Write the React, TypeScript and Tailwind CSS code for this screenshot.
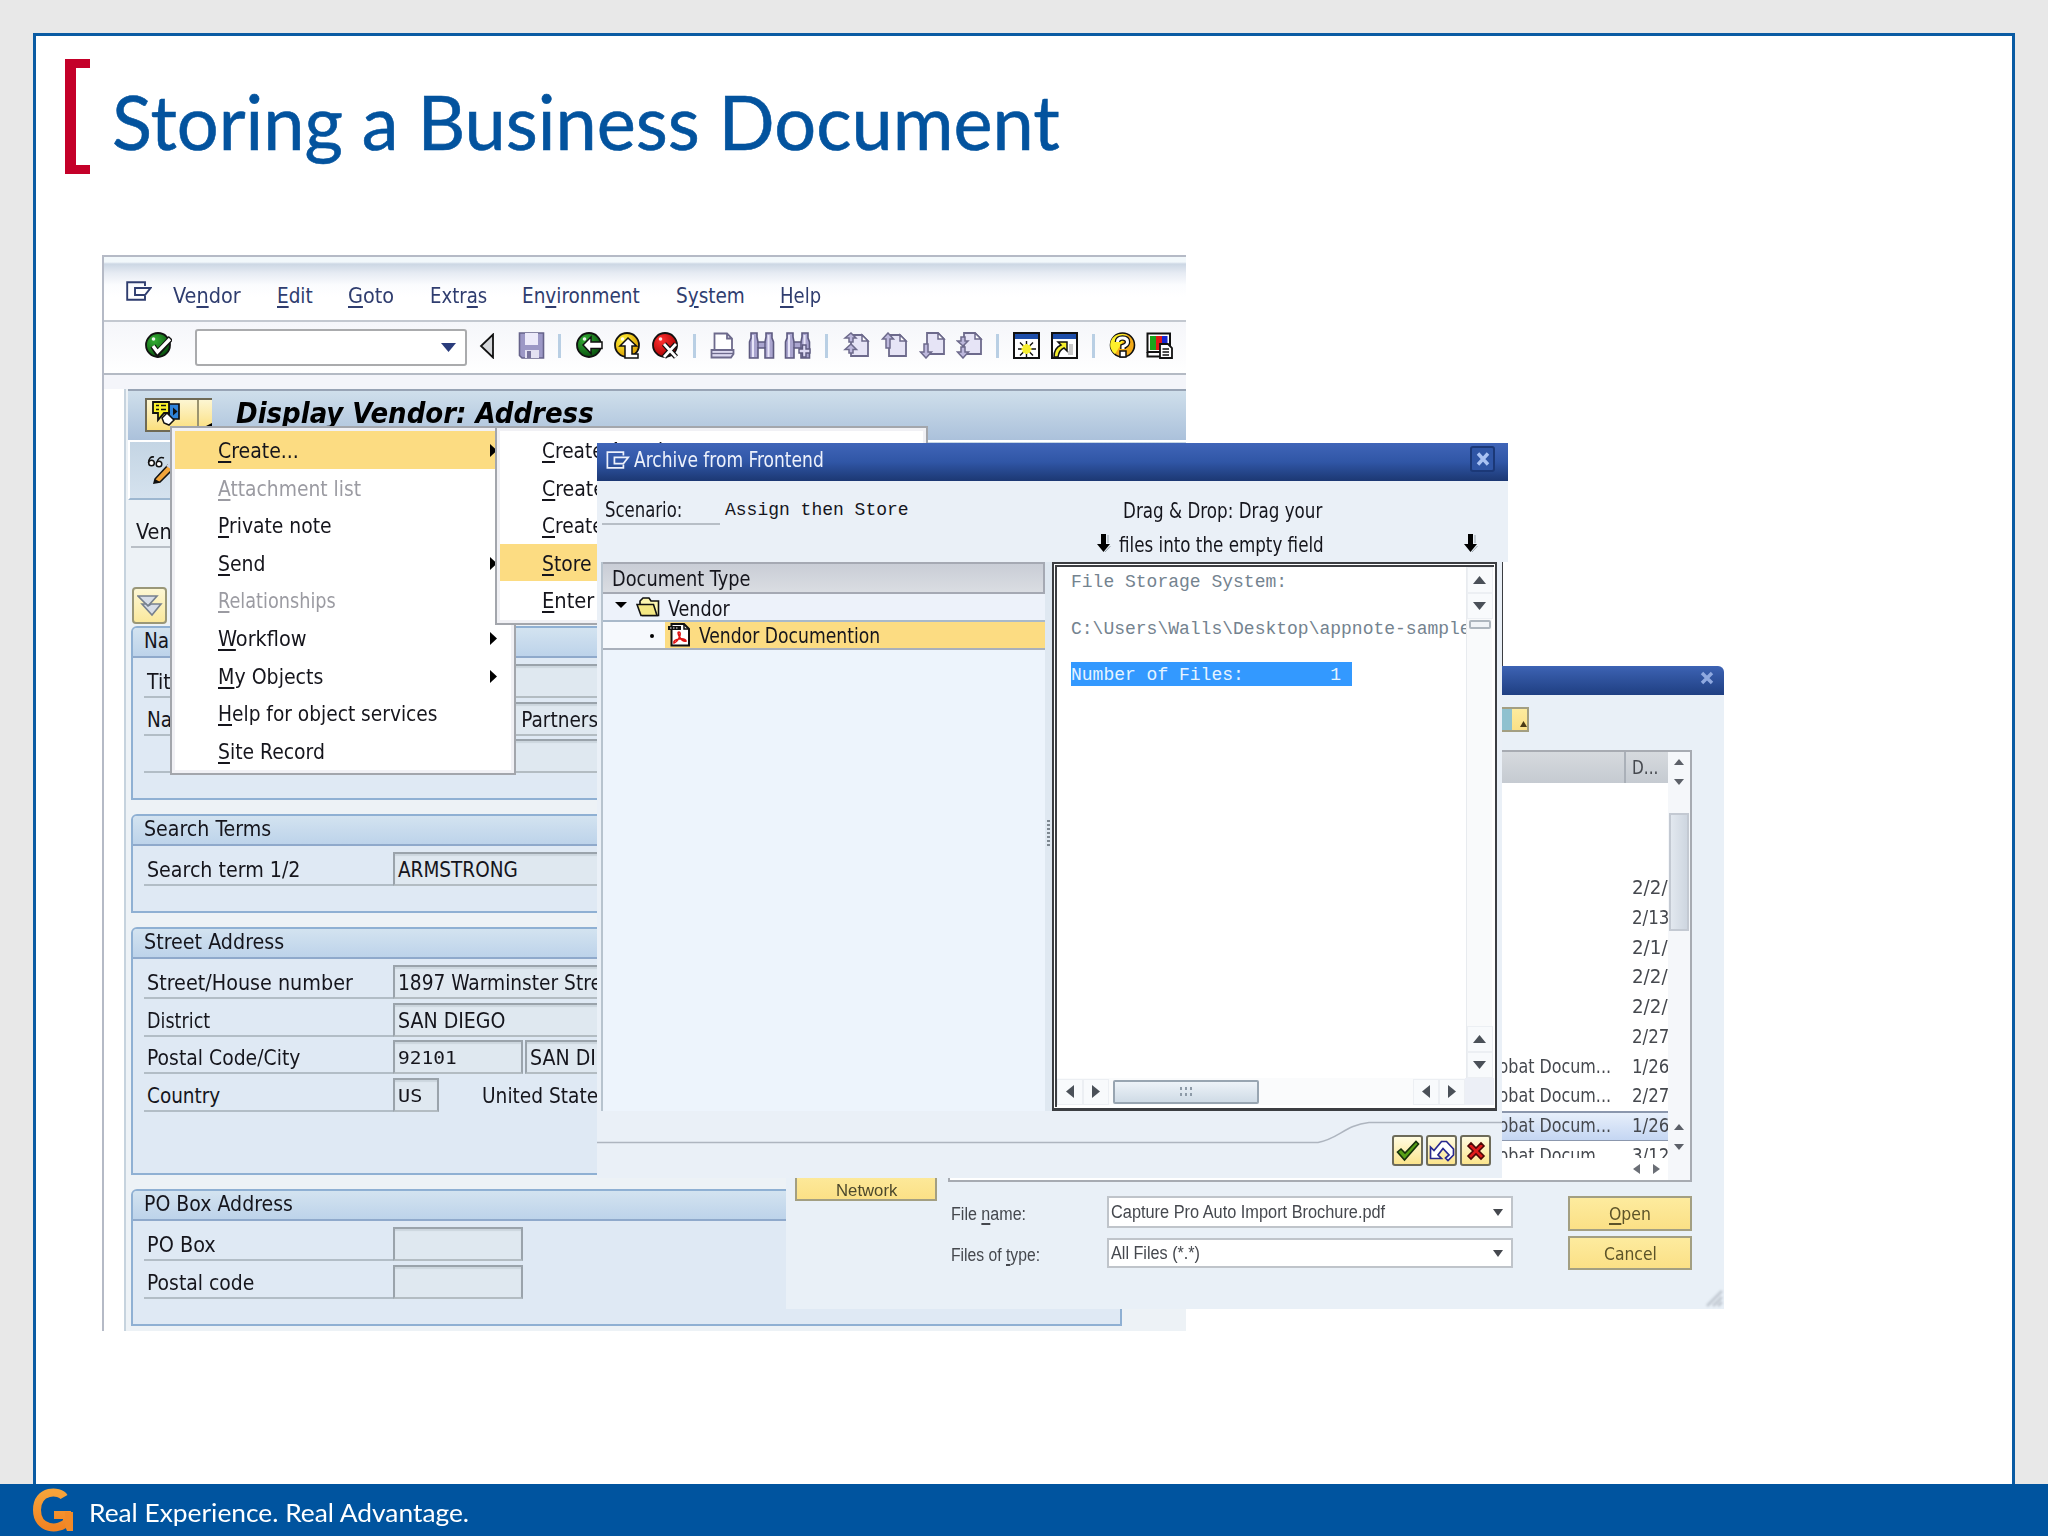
import { useLayoutEffect, useRef, useState } from "react";
import type { ReactNode } from "react";

/* Text set to an exact width: the glyph run is measured and condensed or widened. */
function Fit({ w, className = "", children }: { w: number; className?: string; children: ReactNode }) {
  const ref = useRef<HTMLSpanElement>(null);
  const [scale, setScale] = useState(1);
  useLayoutEffect(() => {
    if (ref.current) setScale(w / ref.current.offsetWidth);
  }, [w]);
  return (
    <span className={"inline-block shrink-0 text-left align-top " + className} style={{ width: w }}>
      <span ref={ref} className="inline-block origin-left whitespace-pre" style={{ transform: `scaleX(${scale})` }}>
        {children}
      </span>
    </span>
  );
}

/* "Ve_ndor" draws "Vendor" with the n underlined as the access key. */
function Key({ t }: { t: string }) {
  const i = t.indexOf("_");
  if (i < 0) return <>{t}</>;
  return (
    <>
      {t.slice(0, i)}
      <span className="underline decoration-[1.5px] underline-offset-[3px]">{t[i + 1]}</span>
      {t.slice(i + 2)}
    </>
  );
}

const Tri = ({ d, className }: { d: "up" | "down" | "left" | "right"; className: string }) => {
  const p = { up: "M0 10L5 0L10 10Z", down: "M0 0H10L5 10Z", left: "M10 0V10L0 5Z", right: "M0 0V10L10 5Z" }[d];
  return (
    <svg viewBox="0 0 10 10" preserveAspectRatio="none" className={className}>
      <path d={p} fill="currentColor" />
    </svg>
  );
};

const ExitIcon = ({ className }: { className: string }) => (
  <svg viewBox="0 0 26 20" className={className} fill="none" stroke="currentColor" strokeWidth="1.9">
    <path d="M19 5V1.2H1.2V18.8H19V15" />
    <path d="M9 7H24.5L19 14H9Z" />
  </svg>
);

const Ball = ({ a, b, c, children, className }: { a: string; b: string; c: string; children: ReactNode; className: string }) => (
  <svg viewBox="0 0 27 27" className={className}>
    <defs>
      <radialGradient id={"g" + c} cx="35%" cy="30%" r="75%">
        <stop offset="0" stopColor={a} />
        <stop offset="1" stopColor={b} />
      </radialGradient>
    </defs>
    <circle cx="13" cy="13" r="12" fill={`url(#g${c})`} stroke="#111" strokeWidth="1.8" />
    <circle cx="8.5" cy="7" r="1.8" fill="#fff" opacity="0.9" />
    {children}
  </svg>
);

/* Page navigation icons: a folded sheet with arrows along its left side. */
function PageIcon({ page, fold, arrows, className }: { page: string; fold: string; arrows: string; className: string }) {
  return (
    <svg viewBox="0 0 27 27" className={className}>
      <path d={page} fill="#e6e4f6" stroke="#6d6a8c" strokeWidth="1.8" />
      <path d={fold} fill="#fff" stroke="#6d6a8c" strokeWidth="1.5" />
      <path d={arrows} fill="#bdb8dc" stroke="#6d6a8c" strokeWidth="1.5" />
    </svg>
  );
}

function Binoculars({ plus, className }: { plus?: boolean; className: string }) {
  return (
    <svg viewBox="0 0 27 27" className={className}>
      <path d="M3 1H9V5L10 10H17L18 5V1H24V6L25.5 10V26H17V16H10V26H1.500V10L3 6Z" fill="#aaa5cf" stroke="#5d5a80" strokeWidth="1.6" />
      <path d="M5 3V25M20.500 3V25" stroke="#e9e7fa" strokeWidth="2" />
      <path d="M10 10V16M17 10V16" stroke="#5d5a80" strokeWidth="1.4" />
      {plus && <path d="M18.500 13H22V17H26V21H22V25H18.500V21H15V17H18.500Z" fill="#dcd9f3" stroke="#5d5a80" strokeWidth="1.4" />}
    </svg>
  );
}

const Sep = ({ className }: { className: string }) => <i className={"h-[24px] w-[3px] shrink-0 bg-[#b9cfe4] " + className} />;

function Toolbar() {
  const i = "h-[27px] w-[27px] shrink-0 ";
  const up = { page: "M8 3H19L25 9V24H8Z", fold: "M19 3V9H25Z" };
  return (
    <div className="flex h-[53px] items-center border-b-2 border-[#b4bac4] bg-gradient-to-b from-[#f5f6fa] to-white pb-[4px]">
      <Ball a="#35b135" b="#064d0c" c="ok" className={i + "ml-[41px]"}>
        <path d="M8 14L12.5 21L26 6" fill="none" stroke="#111" strokeWidth="6" />
        <path d="M8 14L12.5 20L25 7" fill="none" stroke="#fff" strokeWidth="3.4" />
      </Ball>
      <div className="ml-[23px] mt-[3px] flex h-[37px] w-[272px] shrink-0 items-center justify-end rounded-[3px] border-2 border-[#aaabad] bg-white pr-[9px] text-[#2a3c7c]">
        <Tri d="down" className="h-[9px] w-[15px]" />
      </div>
      <svg viewBox="0 0 16 26" className="ml-[12px] h-[26px] w-[16px] shrink-0">
        <path d="M14 1.5V24.5L2 13Z" fill="#d5d7da" stroke="#111" strokeWidth="1.8" />
      </svg>
      <svg viewBox="0 0 27 27" className={i + "ml-[23px]"}>
        <path d="M1.5 1H25.5V26H4L1.5 23.5Z" fill="#9c98c6" stroke="#66638a" strokeWidth="1.6" />
        <path d="M7 1H20V13H7Z" fill="#eceafa" />
        <path d="M7 18H21V26H7Z" fill="#e3e1f2" />
        <path d="M9 19H13V26H9Z" fill="#77739c" />
      </svg>
      <Sep className="ml-[13px]" />
      <Ball a="#35b135" b="#064d0c" c="back" className={i + "ml-[15px]"}>
        <path d="M7 13L15 5V10H26V16.5H15V21.5Z" fill="#fff" stroke="#111" strokeWidth="1.5" />
      </Ball>
      <Ball a="#fff23a" b="#d99a00" c="up" className={i + "ml-[11px]"}>
        <path d="M14 6L22.5 14H18V22H24V26H11V14H6Z" fill="#fff" stroke="#111" strokeWidth="1.5" />
      </Ball>
      <Ball a="#ff3030" b="#a60000" c="cancel" className={i + "ml-[11px]"}>
        <path d="M12 12L24 25M24 12L12 25" stroke="#111" strokeWidth="5.5" />
        <path d="M12 12L24 25M24 12L12 25" stroke="#fff" strokeWidth="2.8" />
      </Ball>
      <Sep className="ml-[14px]" />
      <svg viewBox="0 0 27 27" className={i + "ml-[14px]"}>
        <path d="M4.500 1.500H17L22 6.500V18H4.500Z M17 1.500V6.500H22" fill="#fff" stroke="#6d6a8c" strokeWidth="1.8" />
        <path d="M1.500 18H23.500V22L21 25.500H1.500Z" fill="#dddaf0" stroke="#6d6a8c" strokeWidth="1.8" />
        <path d="M1.500 21.500H23" stroke="#6d6a8c" strokeWidth="1.3" />
      </svg>
      <Binoculars className={i + "ml-[11px]"} />
      <Binoculars plus className={i + "ml-[9px]"} />
      <Sep className="ml-[14px]" />
      <PageIcon {...up} arrows="M8 1L13 6H10V10H6V6H2Z M8 12L13.500 17.500H10V21H6V17.500H2Z" className={i + "ml-[15px]"} />
      <PageIcon {...up} arrows="M7 1L12.500 7H9V16H5V7H1.500Z" className={i + "ml-[11px]"} />
      <PageIcon page="M8 1H19L25 7V22H8Z" fold="M19 1V7H25Z" arrows="M7 26L12.500 20H9V12H5V20H1.500Z" className={i + "ml-[11px]"} />
      <PageIcon page="M8 1H19L25 7V22H8Z" fold="M19 1V7H25Z" arrows="M7 14L12 9H9V5H5V9H1.500Z M7 26L12.500 20H9V15H5V20H1.500Z" className={i + "ml-[10px]"} />
      <Sep className="ml-[13px]" />
      <svg viewBox="0 0 27 27" className={i + "ml-[14px]"}>
        <path d="M1 1H26V26H1Z" fill="#fff" stroke="#111" strokeWidth="2" />
        <path d="M2 2H25V7H2Z" fill="#1d4da8" />
        <path d="M13.500 9V25M5 17H23M7 10.500L20 23.500M20 10.500L7 23.500" stroke="#111" strokeWidth="1.4" />
        <path d="M13.500 12V22M8.500 17H18.500M10 13.500L17 20.500M17 13.500L10 20.500" stroke="#f6ee2c" strokeWidth="2.6" />
      </svg>
      <svg viewBox="0 0 27 27" className={i + "ml-[11px]"}>
        <path d="M1 1H26V26H1Z" fill="#fff" stroke="#111" strokeWidth="2" />
        <path d="M2 2H25V7H2Z" fill="#1d4da8" />
        <path d="M17 21H20V12" fill="none" stroke="#c9c9c9" strokeWidth="4" />
        <path d="M7 10H16V19L13 16Q8 18 7 25H3Q3 16 10 13Z" fill="#f6ee2c" stroke="#111" strokeWidth="1.5" />
      </svg>
      <Sep className="ml-[14px]" />
      <svg viewBox="0 0 27 27" className={i + "ml-[14px]"}>
        <circle cx="13.500" cy="13" r="12" fill="#f3ab19" stroke="#111" strokeWidth="1.6" />
        <path d="M13.500 2A11 11 0 0 0 6 22L18 3Z" fill="#fdf02c" />
        <path d="M8.500 10Q8.500 6 13.500 6Q18.500 6 18.500 10Q18.500 13 14 14.500V17" fill="none" stroke="#111" strokeWidth="5.600" />
        <path d="M11 19H17V25H11Z" fill="#fff" stroke="#111" strokeWidth="1.5" />
        <path d="M8.500 10Q8.500 6 13.500 6Q18.500 6 18.500 10Q18.500 13 14 14.500V17" fill="none" stroke="#fff" strokeWidth="3" />
      </svg>
      <svg viewBox="0 0 27 27" className={i + "ml-[10px]"}>
        <path d="M1.500 1.500H24V20H1.500Z" fill="#fff" stroke="#111" strokeWidth="2" />
        <path d="M4 4H10V18H4Z" fill="#17a51b" />
        <path d="M10 4H16V18H10Z" fill="#e01818" />
        <path d="M16 4H21.500V18H16Z" fill="#1725cf" />
        <path d="M1.500 20V24.500H14" fill="none" stroke="#111" strokeWidth="2" />
        <path d="M14 12H22L26 16V26H14Z" fill="#fff" stroke="#111" strokeWidth="1.8" />
        <path d="M16.500 17H23M16.500 20H23M16.500 23H23" stroke="#111" strokeWidth="1.400" />
      </svg>
    </div>
  );
}

const MENUS: [string, number, string][] = [
  ["Ve_ndor", 68, "ml-[21px]"], ["_Edit", 36, "ml-[36px]"], ["_Goto", 46, "ml-[35px]"], ["Extr_as", 57, "ml-[36px]"],
  ["En_vironment", 118, "ml-[35px]"], ["S_ystem", 69, "ml-[36px]"], ["_Help", 41, "ml-[35px]"],
];

function Group({ title, w, className, children }: { title: string; w: number; className: string; children?: ReactNode }) {
  return (
    <section className={"ml-[5px] w-[991px] overflow-hidden rounded-tl-[6px] border-2 border-[#8fb0d3] bg-[#dfe9f4] " + className}>
      <div className="h-[30px] border-b-2 border-[#8fa9cb] bg-gradient-to-b from-[#d3e3f0] to-[#bdd3ea] pl-[11px] leading-[27px]">
        <Fit w={w}>{title}</Fit>
      </div>
      <div className="pl-[11px] pt-[2px]">{children}</div>
    </section>
  );
}

const FIELD = "mt-[4px] h-[34px] shrink-0 border-2 border-[#9aa3ab] border-b-[#b3bcc2] bg-[#dfe8f0] pl-[3px] leading-[33px] shadow-[inset_0_2px_1px_#ccd6de] whitespace-nowrap overflow-hidden";

function Row({ label, w, children }: { label: string; w: number; children?: ReactNode }) {
  return (
    <div className="flex h-[37.6px]">
      <div className="h-[38px] w-[249px] shrink-0 border-b-2 border-[#b2bdc6] pl-[3px] leading-[45px]">
        {label && <Fit w={w}>{label}</Fit>}
      </div>
      {children}
    </div>
  );
}

const ITEMS: [string, number, boolean, boolean][] = [
  ["_Create...", 81, true, false],
  ["_Attachment list", 143, false, true],
  ["_Private note", 114, false, false],
  ["_Send", 47, true, false],
  ["_Relationships", 118, false, true],
  ["_Workflow", 89, true, false],
  ["_My Objects", 105, true, false],
  ["_Help for object services", 219, false, false],
  ["_Site Record", 107, false, false],
];

const SUB: [string, number][] = [
  ["_Create Attachment", 176], ["_Create note", 112], ["_Create external document", 244], ["_Store business document", 238], ["_Enter Bar Code", 148],
];

function SapWindow() {
  return (
    <div className="absolute left-[102px] top-[255px] h-[1076px] w-[1084px] overflow-hidden border-l-2 border-t-2 border-[#b5bac6] bg-white">
      <div className="flex h-[65px] items-start border-b-2 border-[#c3c8d0] bg-[linear-gradient(180deg,#f2f8fb_0,#f2f8fb_5px,#ccd7e4_7px,#e6ebf3_16px,#fbfcfe_28px,#fff_40px)] pt-[24px] leading-[30px] text-[#2f3d6f]">
        <ExitIcon className="ml-[22px] h-[20px] w-[26px] shrink-0" />
        {MENUS.map(([t, w, m]) => (
          <Fit key={t} w={w} className={m}>
            <Key t={t} />
          </Fit>
        ))}
      </div>
      <Toolbar />
      <div className="h-[14px] bg-[#f4f5fa]" />
      <div className="ml-[20px] h-[944px] border-l-2 border-[#c6d3de] bg-[#edf2f6]">
        <div className="ml-[2px] flex h-[53px] border-b-2 border-t-2 border-b-white border-t-[#98a4b5] bg-gradient-to-b from-[#cfdfeb] to-[#abc1db]">
          <div className="ml-[17px] mt-[7px] flex h-[34px] w-[67px] overflow-hidden border-2 border-r-0 border-[#6f6a55] bg-gradient-to-b from-[#fdf6d2] to-[#fbdf7c]">
            <svg viewBox="0 0 50 30" className="h-[30px] w-[50px] shrink-0">
              <path d="M22 4H32V19H22Z" fill="#2f83d8" stroke="#111" strokeWidth="1.700" />
              <path d="M6 2H22V13H17L11 20V13H6Z" fill="#fbf129" stroke="#111" strokeWidth="1.800" />
              <path d="M9 5.500H12M14 5.500H19M9 9.500H12M14 9.500H19" stroke="#111" strokeWidth="1.300" />
              <path d="M26 7.500V15.500L30.500 11.500Z" fill="#111" />
              <path d="M15 18L20 13L27 20L22 25L17 23Z" fill="#fff" stroke="#111" strokeWidth="1.500" />
            </svg>
            <span className="h-full w-[2px] bg-[#9b946f]" />
            <Tri d="left" className="ml-[7px] mt-[23px] h-[6px] w-[7px] text-black" />
          </div>
          <Fit w={358} className="ml-[24px] text-[27.5px] font-bold italic leading-[45px] text-black">
            Display Vendor: Address
          </Fit>
        </div>
        <div className="ml-[2px] h-[58px] border-b-2 border-l-2 border-b-[#9db7d0] border-l-white bg-gradient-to-b from-[#c4d5e4] to-[#d5e2ee] pl-[17px] pt-[12px]">
          <svg viewBox="0 0 30 30" className="h-[30px] w-[30px]">
            <path d="M8 25L21 11L26 15L13 28L7 29Z" fill="#f2a43a" stroke="#111" strokeWidth="1.500" />
            <path d="M19 12L23 8L27 11L24 15Z" fill="#cdd5e6" />
            <path d="M8 25L13 28L7 29Z" fill="#111" />
            <path d="M1.500 9Q2 2 7 3M10 9Q11 2 17 4" fill="none" stroke="#111" strokeWidth="1.500" />
            <circle cx="4.500" cy="9" r="2.800" fill="#fff" stroke="#111" strokeWidth="1.500" />
            <circle cx="12" cy="10" r="2.800" fill="#fff" stroke="#111" strokeWidth="1.500" />
          </svg>
        </div>
        <div className="ml-[5px] h-[48px] w-[420px] border-b-2 border-[#b9bfc6] pl-[5px] leading-[64px]">
          <Fit w={68}>Vendor</Fit>
        </div>
        <div className="ml-[6px] mt-[39px] flex h-[37px] w-[35px] items-center justify-center rounded-[4px] border-2 border-[#9a9778] bg-gradient-to-b from-[#fdf7d4] to-[#fae89c]">
          <svg viewBox="0 0 26 24" className="h-[24px] w-[26px] shrink-0" fill="#d7dde8" stroke="#77808e" strokeWidth="1.600">
            <path d="M1 2H20L11 12Z" />
            <path d="M5 10H9L11 12L14 10H24L15 21Z" />
          </svg>
        </div>
        <Group title="Name" w={54} className="mt-[2px] h-[174px]">
          <Row label="Title" w={40}>
            <div className={FIELD + " w-[460px]"} />
          </Row>
          <Row label="Name" w={54}>
            <div className={FIELD + " w-[460px]"}>
              <Fit w={200}>Armstrong &amp; Partners</Fit>
            </div>
          </Row>
          <Row label="" w={0}>
            <div className={FIELD + " w-[460px]"} />
          </Row>
        </Group>
        <Group title="Search Terms" w={127} className="mt-[14px] h-[99px]">
          <Row label="Search term 1/2" w={153}>
            <div className={FIELD + " w-[460px]"}>
              <Fit w={120}>ARMSTRONG</Fit>
            </div>
          </Row>
        </Group>
        <Group title="Street Address" w={140} className="mt-[14px] h-[248px]">
          <Row label="Street/House number" w={206}>
            <div className={FIELD + " w-[460px]"}>
              <Fit w={223}>1897 Warminster Street</Fit>
            </div>
          </Row>
          <Row label="District" w={63}>
            <div className={FIELD + " w-[460px]"}>
              <Fit w={107}>SAN DIEGO</Fit>
            </div>
          </Row>
          <Row label="Postal Code/City" w={153}>
            <div className={FIELD + " w-[130px] font-['DejaVu_Sans_Mono',monospace] text-[18.5px]"}>
              <Fit w={59} className="-mt-px">92101</Fit>
            </div>
            <div className={FIELD + " ml-[2px] w-[328px]"}>
              <Fit w={107}>SAN DIEGO</Fit>
            </div>
          </Row>
          <Row label="Country" w={73}>
            <div className={FIELD + " w-[46px] font-['DejaVu_Sans_Mono',monospace] text-[18.5px]"}>
              <Fit w={24} className="-mt-px">US</Fit>
            </div>
            <Fit w={126} className="ml-[43px] leading-[45px]">United States</Fit>
          </Row>
        </Group>
        <Group title="PO Box Address" w={149} className="mt-[14px] h-[137px]">
          <Row label="PO Box" w={69}>
            <div className={FIELD + " w-[130px]"} />
          </Row>
          <Row label="Postal code" w={107}>
            <div className={FIELD + " w-[130px]"} />
          </Row>
        </Group>
      </div>
    </div>
  );
}

function ContextMenus() {
  return (
    <>
      <div className="absolute left-[170px] top-[426px] h-[349px] w-[346px] border-2 border-[#a3a6ac] bg-[#f1f1f5] p-[3px]">
        <div className="h-full bg-white">
          {ITEMS.map(([t, w, arrow, off], n) => (
            <div
              key={t}
              className={
                "flex h-[37.6px] pl-[43px] leading-[41px] " +
                (n === 0 ? "bg-[#fcdc82] " : "") + (off ? "text-[#9b9ba2]" : "text-[#15151c]")
              }
            >
              <Fit w={w}>
                <Key t={t} />
              </Fit>
              {arrow && <Tri d="right" className="ml-auto mr-[14px] mt-[13px] h-[13px] w-[7px] text-black" />}
            </div>
          ))}
        </div>
      </div>
      <div className="absolute left-[495px] top-[426px] h-[199px] w-[433px] border-2 border-[#a3a6ac] bg-[#f1f1f5] p-[3px]">
        <div className="h-full bg-white">
          {SUB.map(([t, w], n) => (
            <div key={t} className={"h-[37.6px] pl-[42px] leading-[41px] text-[#15151c] " + (n === 3 ? "bg-[#fcdc82]" : "")}>
              <Fit w={w}>
                <Key t={t} />
              </Fit>
            </div>
          ))}
        </div>
      </div>
    </>
  );
}

const FILES: [string, string, number][] = [
  ["", "2/2/2", 47], ["", "2/13", 37], ["", "2/1/2", 47], ["", "2/2/2", 47], ["", "2/2/2", 47], ["", "2/27", 37],
  ["Acrobat Docum...", "1/26", 37], ["Acrobat Docum...", "2/27", 37], ["Acrobat Docum...", "1/26", 37], ["Acrobat Docum...", "3/12", 37],
];

const YELLOW = "border-2 border-[#a39f82] bg-gradient-to-b from-[#fdeb9e] to-[#fbe086]";

function FileDialog() {
  return (
    <div className="absolute left-[786px] top-[666px] h-[643px] w-[938px] overflow-hidden rounded-t-[6px] bg-[#e9f0f7] text-[19px] text-[#45484e]">
      <div className="flex h-[29px] justify-end bg-gradient-to-b from-[#3d63b4] to-[#1f3f82] pr-[10px] pt-[5px]">
        <svg viewBox="0 0 14 14" className="h-[14px] w-[14px] blur-[0.7px]">
          <path d="M2 2L12 12M12 2L2 12" stroke="#8fa9e0" strokeWidth="3.400" />
        </svg>
      </div>
      <div className="flex">
        <div className="flex w-[162px] flex-col pl-[9px] pt-[475px]">
          <div className={"h-[31px] w-[142px] text-center font-['Liberation_Sans',Arial,sans-serif] text-[17px] leading-[38px] text-[#4c482c] " + YELLOW}>
            <Fit w={61} className="blur-[0.7px]">Network</Fit>
          </div>
        </div>
        <div className="w-[744px]">
          <div className="flex h-[55px] pl-[540px] pt-[12px]">
            <div className={"flex h-[25px] w-[41px] items-end " + YELLOW}>
              <span className="h-full w-[22px] bg-[#8fc1cf]" />
              <Tri d="up" className="mb-[3px] ml-[8px] h-[6px] w-[7px] text-[#4b3b16]" />
            </div>
          </div>
          <div className="flex h-[432px] border-2 border-[#a7abb2] bg-white">
            <div className="flex w-[718px] flex-col overflow-hidden">
              <div className="flex h-[31px] shrink-0 bg-gradient-to-b from-[#d6dade] to-[#c5cad1]">
                <div className="w-[676px] shrink-0 border-r-2 border-[#aab0b8]" />
                <div className="pl-[6px] leading-[31px]">
                  <Fit w={26} className="blur-[0.7px]">D...</Fit>
                </div>
              </div>
              <div className="h-[375px] shrink-0 overflow-hidden pt-[90px]">
                {FILES.map(([kind, date, w], n) => (
                  <div
                    key={n}
                    className={"flex h-[29.75px] pl-[523px] leading-[29px] " + (n === 8 ? "bg-gradient-to-b from-[#eaf1fb] to-[#c3d5f2] shadow-[inset_0_2px_0_#8b97ad,inset_0_-1px_0_#8b97ad]" : "")}
                  >
                    <span className="w-[159px] shrink-0">{kind && <Fit w={138} className="blur-[0.7px]">{kind}</Fit>}</span>
                    <Fit w={w} className="blur-[0.7px]">{date}</Fit>
                  </div>
                ))}
              </div>
              <div className="flex h-[22px] items-center justify-end gap-[13px] pr-[8px] text-[#6b6f76]">
                <Tri d="left" className="h-[10px] w-[7px]" />
                <Tri d="right" className="h-[10px] w-[7px]" />
              </div>
            </div>
            <div className="flex w-[22px] flex-col items-center bg-[#f5f7fa] pt-[7px] text-[#5c6068]">
              <Tri d="up" className="h-[6px] w-[10px]" />
              <Tri d="down" className="mt-[14px] h-[6px] w-[10px]" />
              <span className="mt-[28px] h-[118px] w-[20px] border-2 border-[#c3c9d2] bg-gradient-to-r from-[#e2e8ef] to-[#ced6e0]" />
              <Tri d="up" className="mt-[193px] h-[6px] w-[10px]" />
              <Tri d="down" className="mt-[14px] h-[6px] w-[10px]" />
            </div>
          </div>
          <div className="flex pl-[3px] pt-[14px]">
            <div className="w-[156px] font-['Liberation_Sans',Arial,sans-serif] text-[18px]">
              <div className="mt-[1px] leading-[35px]">
                <Fit w={75} className="blur-[0.7px]"><Key t="File _name:" /></Fit>
              </div>
              <div className="mt-[6px] leading-[34px]">
                <Fit w={89} className="blur-[0.7px]"><Key t="Files of _type:" /></Fit>
              </div>
            </div>
            <div className="w-[406px] font-['Liberation_Sans',Arial,sans-serif] text-[18px]">
              <div className="flex h-[32px] items-center justify-between border-2 border-[#bfc4ca] bg-white pl-[2px] pr-[8px] leading-[26px]">
                <Fit w={274} className="blur-[0.7px]">Capture Pro Auto Import Brochure.pdf</Fit>
                <Tri d="down" className="h-[7px] w-[10px]" />
              </div>
              <div className="mt-[10px] flex h-[30px] items-center justify-between border-2 border-[#bfc4ca] bg-white pl-[2px] pr-[8px] leading-[28px]">
                <Fit w={89} className="blur-[0.7px]">All Files (*.*)</Fit>
                <Tri d="down" className="h-[7px] w-[10px]" />
              </div>
            </div>
            <div className="ml-[55px] w-[124px] text-center text-[17px] text-[#5c5329]">
              <div className={"h-[35px] leading-[33px] " + YELLOW}>
                <Fit w={42} className="blur-[0.7px]"><Key t="_Open" /></Fit>
              </div>
              <div className={"mt-[5px] h-[34px] leading-[32px] " + YELLOW}>
                <Fit w={53} className="blur-[0.7px]">Cancel</Fit>
              </div>
            </div>
          </div>
        </div>
      </div>
      <svg viewBox="0 0 18 18" className="absolute bottom-[2px] right-[1px] h-[18px] w-[18px] blur-[1px]">
        <path d="M2 17L17 2M8 17L17 8M13 17L17 13" stroke="#c3cad3" strokeWidth="3" />
      </svg>
    </div>
  );
}

const DropArrow = ({ className }: { className: string }) => (
  <svg viewBox="0 0 15 20" className={"h-[20px] w-[15px] shrink-0 " + className}>
    <path d="M5 0H10V10H14L7.500 18L1 10H5Z" fill="#000" />
    <path d="M12 1V9M9 18L14.500 12" stroke="#9aa5ad" strokeWidth="1" />
  </svg>
);

const Cell = ({ d, v }: { d: "up" | "down" | "left" | "right"; v?: boolean }) => (
  <span className="flex h-[26px] w-[26px] shrink-0 items-center justify-center border border-[#eceff3] bg-[#f8fafc] text-[#4a5058]">
    <Tri d={d} className={v ? "h-[8px] w-[13px]" : "h-[13px] w-[8px]"} />
  </span>
);

const BTN = "flex h-[31px] w-[31px] items-center justify-center rounded-[3px] border-2 border-[#6d6b5a] bg-gradient-to-b from-[#fffbe0] to-[#fbe48c]";

function ArchiveDialog() {
  return (
    <div className="absolute left-[597px] top-[443px] w-[911px] text-[#15151c]">
      <div className="flex h-[38px] items-start bg-gradient-to-b from-[#4065b8] via-[#3056a6] to-[#1c3873] text-[#edf1fb]">
        <ExitIcon className="ml-[9px] mt-[8px] h-[18px] w-[24px]" />
        <Fit w={190} className="ml-[4px] leading-[34px]">Archive from Frontend</Fit>
        <div className="ml-auto mr-[13px] mt-[3px] flex h-[26px] w-[25px] items-center justify-center rounded-[3px] border-2 border-[#1b3877] bg-[#2f55a5]">
          <svg viewBox="0 0 14 14" className="h-[14px] w-[14px]">
            <path d="M2 1.500L12 12.500M12 1.500L2 12.500" stroke="#a9c2f3" strokeWidth="3.400" />
          </svg>
        </div>
      </div>
      <div className="flex h-[81px] bg-[#eaf0f7]">
        <div className="ml-[5px] mt-[14px] h-[30px] w-[118px] border-b-2 border-[#b7bec6] pl-[3px] leading-[31px]">
          <Fit w={77}>Scenario:</Fit>
        </div>
        <Fit w={184} className="ml-[5px] mt-[13px] font-['Liberation_Mono',monospace] text-[18px] leading-[32px]">
          Assign then Store
        </Fit>
        <div className="ml-[187px] mt-[12px] flex flex-col leading-[36px]">
          <Fit w={199} className="ml-[27px]">Drag &amp; Drop: Drag your</Fit>
          <div className="-mt-px flex leading-[34px]">
            <DropArrow className="mt-[6px]" />
            <Fit w={205} className="ml-[8px]">files into the empty field</Fit>
            <DropArrow className="ml-[139px] mt-[6px]" />
          </div>
        </div>
      </div>
      <div className="h-[616px] w-[905px] bg-[#eaf0f7]">
        <div className="flex h-[549px]">
          <div className="ml-[4px] w-[444px] border-l-2 border-[#b7c3ce] bg-[#edf4fc]">
            <div className="h-[32px] border-2 border-l-0 border-[#a5a9b3] bg-gradient-to-b from-[#c9cdd6] to-[#dadde2] pl-[9px] leading-[31px]">
              <Fit w={138}>Document Type</Fit>
            </div>
            <div className="flex h-[28px] items-start border-b-2 border-[#a9b9ca] bg-[#edf2fa] leading-[29px]">
              <Tri d="down" className="ml-[12px] mt-[8px] h-[6px] w-[12px] text-black" />
              <svg viewBox="0 0 24 20" className="ml-[9px] mt-[3px] h-[20px] w-[24px]">
                <path d="M4 7V4L7 1H13L15 4H22.500V18.500H6" fill="#fdf7b0" stroke="#111" strokeWidth="1.600" />
                <path d="M1 7.500H17.500L21 18.500H5Z" fill="#f4e883" stroke="#111" strokeWidth="1.600" />
              </svg>
              <Fit w={62} className="ml-[8px] mt-[1px]">Vendor</Fit>
            </div>
            <div className="flex h-[28px] border-b-2 border-[#a9b0bb] bg-[#f6f9fd]">
              <div className="flex w-[62px] justify-end pr-[11px] pt-[12px]">
                <i className="h-[4px] w-[4px] rounded-full bg-black" />
              </div>
              <div className="flex flex-1 bg-[#fcdc82] leading-[29px]">
                <svg viewBox="0 0 22 24" className="ml-[3px] mt-[1px] h-[24px] w-[22px]">
                  <path d="M3.500 1H16L21 6V22.500H3.500Z" fill="#fff" stroke="#111" strokeWidth="2" />
                  <path d="M16 1V6H21" fill="none" stroke="#111" strokeWidth="1.500" />
                  <path d="M0 3H13V7H0Z" fill="#111" />
                  <path d="M2 5H11" stroke="#fff" strokeWidth="1" strokeDasharray="1.500 1.500" />
                  <path d="M11 9Q9 9 11.500 14Q9 19 6 20Q5 17 11 16Q17 15 18 18Q15 19 11.500 14Q13 9 11 9" fill="none" stroke="#e01212" strokeWidth="1.600" />
                </svg>
                <Fit w={181} className="ml-[9px]">Vendor Documention</Fit>
              </div>
            </div>
          </div>
          <div className="flex w-[7px] flex-col items-center gap-[2px] bg-[#dfe8f1] pt-[258px]">
            {[0, 1, 2, 3, 4, 5, 6].map((n) => (
              <i key={n} className="h-[2px] w-[3px] bg-[#7d8790]" />
            ))}
          </div>
          <div className="w-[445px] border-2 border-b-[3px] border-[#3c3e42] bg-white p-px">
            <div className="flex h-[542px] flex-col border-l-2 border-t-2 border-[#3c3e42]">
              <div className="flex h-[511px]">
                <div className="w-[409px] shrink-0 overflow-hidden whitespace-pre pl-[14px] font-['Liberation_Mono',monospace] text-[18px] text-[#74838f]">
                  <div className="mt-[4px] h-[23.5px] leading-[23px]">File Storage System:</div>
                  <div className="mt-[23.5px] h-[23.5px] leading-[23px]">{"C:\\Users\\Walls\\Desktop\\appnote-sample"}</div>
                  <div className="mt-[20.5px] h-[24px] w-[281px] bg-[#3399ff] leading-[27px] text-[#e6f4ff]">{"Number of Files:        1 "}</div>
                </div>
                <div className="flex w-[26px] flex-col items-center border-l border-[#e8ebef] bg-[#f9fafb]">
                  <Cell d="up" v />
                  <Cell d="down" v />
                  <span className="mt-[1px] h-[9px] w-[22px] shrink-0 rounded-[2px] border-2 border-[#aeb6be] bg-[#f1f4f7]" />
                  <span className="flex-1" />
                  <Cell d="up" v />
                  <Cell d="down" v />
                </div>
              </div>
              <div className="flex h-[27px] items-center bg-[#fafbfc]">
                <Cell d="left" />
                <Cell d="right" />
                <span className="ml-[4px] grid h-[24px] w-[146px] place-content-center rounded-[2px] border-2 border-[#98a5b1] bg-gradient-to-b from-[#edf3f8] to-[#cfdbe6]">
                  <span className="grid grid-cols-3 gap-[3px]">
                    {[0, 1, 2, 3, 4, 5].map((n) => (
                      <i key={n} className="h-[3px] w-[2px] bg-[#8d9aa7]" />
                    ))}
                  </span>
                </span>
                <span className="flex-1" />
                <Cell d="left" />
                <Cell d="right" />
                <span className="h-full w-[29px] bg-[#eceff6]" />
              </div>
            </div>
          </div>
        </div>
        <div className="relative flex h-[67px] justify-end gap-[3px] pr-[11px] pt-[24px]">
          <svg viewBox="0 0 905 67" className="absolute inset-0 h-[67px] w-[905px]" fill="none">
            <path d="M0 31.500H721C742 28 748 14 772 11.500H905" stroke="#aeb5bf" strokeWidth="1.500" />
          </svg>
          <div className={BTN}>
            <svg viewBox="0 0 24 22" className="h-[22px] w-[24px]">
              <path d="M1.500 12L5 9L9 13L20 1.500L22.500 4L8.500 20Z" fill="#57a016" stroke="#14300a" strokeWidth="1.600" />
            </svg>
          </div>
          <div className={BTN}>
            <svg viewBox="0 0 26 22" className="h-[22px] w-[26px] shrink-0">
              <path d="M1.500 7V18.500H12.500L9 15L14 8.500L20 15L16.500 18L19 20.500L24.500 15V9L17.500 1.500H12.500L5 10.500Z" fill="#fff" stroke="#27278f" strokeWidth="1.700" />
            </svg>
          </div>
          <div className={BTN}>
            <svg viewBox="0 0 20 20" className="h-[20px] w-[20px]">
              <path d="M2 5L5 2L10 7L15 2L18 5L13 10L18 15L15 18L10 13L5 18L2 15L7 10Z" fill="#e01c1c" stroke="#4d0808" strokeWidth="1.600" />
            </svg>
          </div>
        </div>
      </div>
    </div>
  );
}

export default function App() {
  return (
    <div className="relative flex h-[1536px] w-[2048px] flex-col overflow-hidden bg-[#e8e8e8] font-['DejaVu_Sans_Condensed','DejaVu_Sans',sans-serif] text-[20.5px] text-[#15151c]">
      <main className="mx-[33px] mt-[33px] h-[1451px] border-[3px] border-b-0 border-[#0a5ba3] bg-white">
        <header className="flex pl-[29px] pt-[23px]">
          <div className="h-[115px] w-[25px] border-y-[9px] border-l-[11px] border-[#c40029]" />
          <h1 className="ml-[22px] font-['Lato',sans-serif] text-[76px] leading-[123px] text-[#03539e] [-webkit-text-stroke:0.6px_#03539e]">
            <Fit w={948}>Storing a Business Document</Fit>
          </h1>
        </header>
      </main>
      <footer className="flex h-[52px] items-center bg-[#00549f] text-white">
        <svg viewBox="0 0 42 44" className="ml-[32px] h-[44px] w-[42px]">
          <defs>
            <linearGradient id="logo" x1="0" y1="0" x2="0" y2="1">
              <stop offset="0" stopColor="#f6a33a" />
              <stop offset="1" stopColor="#f28423" />
            </linearGradient>
          </defs>
          <path d="M32 9C28 2 5 1 5 22C5 42 27 43 35 34V27H22" fill="none" stroke="url(#logo)" strokeWidth="8" />
          <path d="M33 24H41V43H35L33 38Z" fill="#f28a28" />
        </svg>
        <Fit w={380} className="ml-[15px] mt-[4px] font-['Lato',sans-serif] text-[25px] leading-[52px]">
          Real Experience. Real Advantage.
        </Fit>
      </footer>
      <SapWindow />
      <ContextMenus />
      <FileDialog />
      <i className="absolute left-[1501px] top-[561px] h-[105px] w-[2px] bg-[#3c3e42]" />
      <ArchiveDialog />
    </div>
  );
}
